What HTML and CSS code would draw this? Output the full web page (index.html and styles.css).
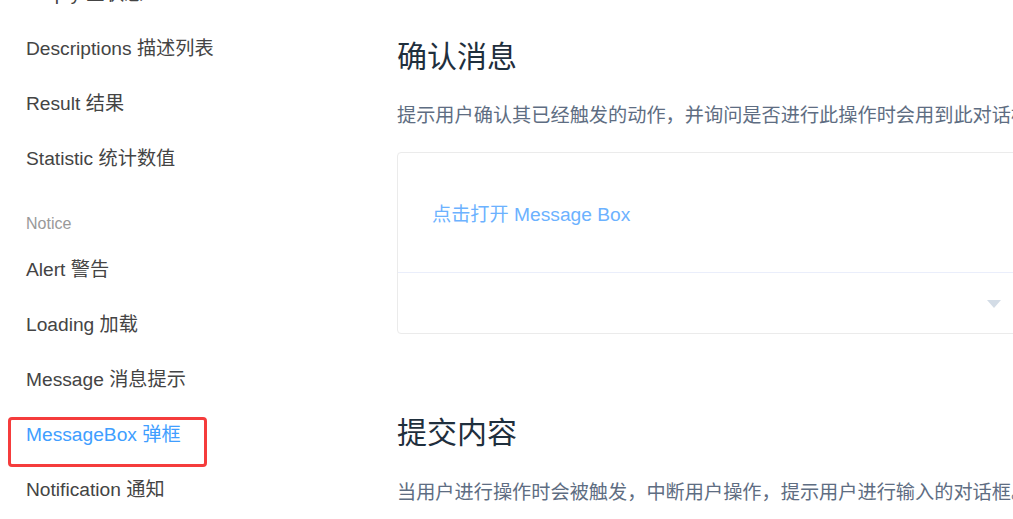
FILE: index.html
```html
<!DOCTYPE html>
<html lang="zh-CN">
<head>
<meta charset="utf-8">
<title>MessageBox 弹框</title>
<link rel="stylesheet" href="styles.css">
</head>
<body>
<div class="page">
  <nav class="sidebar">
    <ul class="nav-list">
      <li class="nav-item">Empty 空状态</li>
      <li class="nav-item">Descriptions 描述列表</li>
      <li class="nav-item">Result 结果</li>
      <li class="nav-item">Statistic 统计数值</li>
      <li class="nav-group">Notice</li>
      <li class="nav-item">Alert 警告</li>
      <li class="nav-item">Loading 加载</li>
      <li class="nav-item">Message 消息提示</li>
      <li class="nav-item active">MessageBox 弹框</li>
      <li class="nav-item">Notification 通知</li>
    </ul>
    <div class="highlight"></div>
  </nav>
  <main class="content">
    <h3 class="title">确认消息</h3>
    <p class="desc">提示用户确认其已经触发的动作，并询问是否进行此操作时会用到此对话框。</p>
    <div class="demo-block">
      <div class="demo-source">
        <button class="text-btn" type="button">点击打开 Message Box</button>
      </div>
      <div class="demo-control">
        <span class="caret"></span>
      </div>
    </div>
    <h3 class="title title-second">提交内容</h3>
    <p class="desc">当用户进行操作时会被触发，中断用户操作，提示用户进行输入的对话框。</p>
  </main>
</div>
</body>
</html>
```

FILE: styles.css
```css
html, body {
  margin: 0;
  padding: 0;
  overflow: hidden;
  background: #fff;
}

body {
  font-family: "Liberation Sans", "Noto Sans CJK SC", sans-serif;
  width: 1013px;
  height: 519px;
}

.page {
  display: grid;
  grid-template-columns: 397px 1194px;
  align-items: start;
}

.sidebar {
  position: relative;
}

.nav-list {
  list-style: none;
  margin: -34px 0 0 0;
  padding: 0 0 0 26px;
}

.nav-item {
  height: 55px;
  line-height: 55px;
  font-size: 19.2px;
  color: #444;
  white-space: nowrap;
}

.nav-item.active {
  color: #409eff;
}

.nav-group {
  margin-top: 19px;
  line-height: 37px;
  font-size: 16px;
  color: #999;
}

.highlight {
  position: absolute;
  left: 8px;
  top: 417px;
  width: 193px;
  height: 44px;
  border: 3px solid #f53c3c;
  border-radius: 4px;
}

.content {
  padding-top: 37px;
}

.title {
  margin: 0;
  font-size: 30px;
  line-height: 40px;
  font-weight: 400;
  color: #1f2f3d;
}

.title-second {
  margin-top: 79px;
}

.desc {
  margin: 24px 0 0 0;
  font-size: 19.2px;
  line-height: 30px;
  color: #5e6d82;
  white-space: nowrap;
}

.title-second + .desc {
  margin-top: 25px;
}

.demo-block {
  margin-top: 21px;
  border: 1px solid #ebebeb;
  border-radius: 4px;
}

.demo-source {
  height: 119px;
  display: flex;
  align-items: center;
  padding-left: 34px;
}

.text-btn {
  border: 0;
  background: none;
  padding: 0;
  font-family: "Liberation Sans", "Noto Sans CJK SC", sans-serif;
  font-size: 19.2px;
  color: #6cb2ff;
  cursor: pointer;
}

.demo-control {
  height: 60px;
  border-top: 1px solid #eaeefb;
  display: flex;
  align-items: center;
  justify-content: center;
}

.caret {
  width: 0;
  height: 0;
  border-left: 7px solid transparent;
  border-right: 7px solid transparent;
  border-top: 8px solid #d3dce6;
  margin-top: 2px;
}
```
